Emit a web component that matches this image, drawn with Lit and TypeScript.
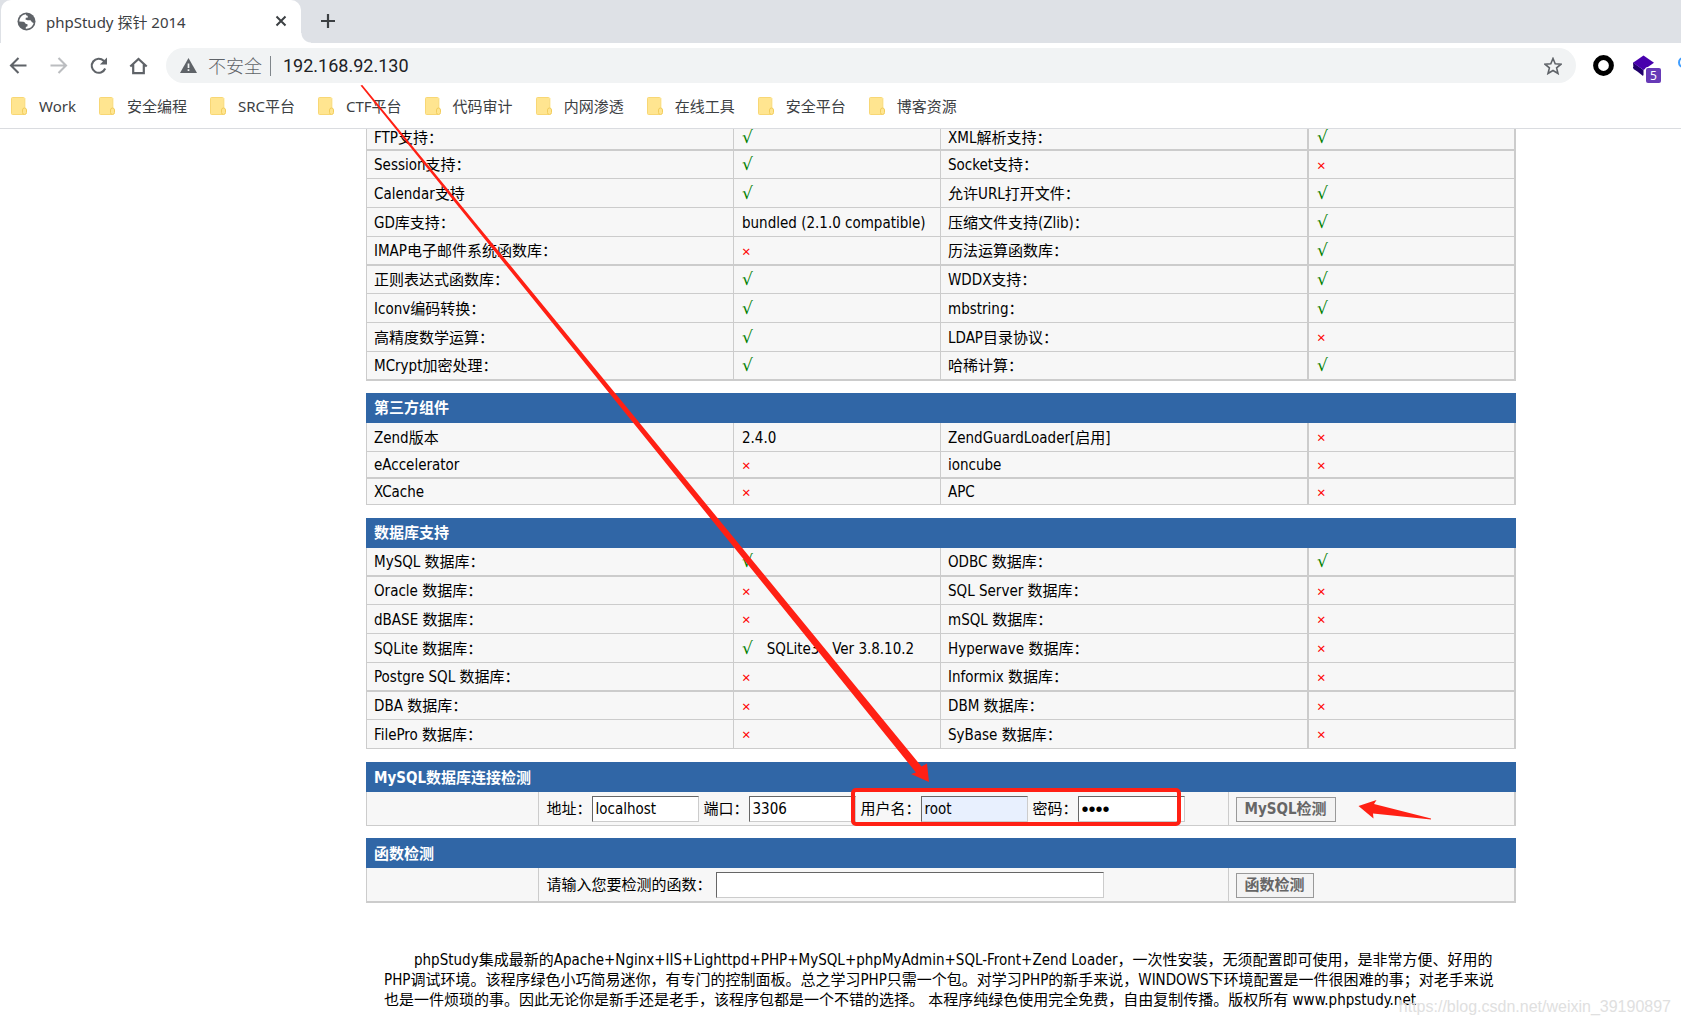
import { LitElement, html, css, svg, nothing } from "lit";
import { customElement, property } from "lit/decorators.js";
import { classMap } from "lit/directives/class-map.js";

interface Row {
  cells: [string, string, string, string];
  thick?: boolean;
  latin?: boolean;
  partial?: boolean;
}

const Y = "√";
const N = "×";

const MODULES: Row[] = [
  { cells: ["FTP支持：", Y, "XML解析支持：", Y], thick: true, partial: true },
  { cells: ["Session支持：", Y, "Socket支持：", N] },
  { cells: ["Calendar支持", Y, "允许URL打开文件：", Y] },
  { cells: ["GD库支持：", "bundled (2.1.0 compatible)", "压缩文件支持(Zlib)：", Y] },
  { cells: ["IMAP电子邮件系统函数库：", N, "历法运算函数库：", Y], thick: true },
  { cells: ["正则表达式函数库：", Y, "WDDX支持：", Y] },
  { cells: ["Iconv编码转换：", Y, "mbstring：", Y] },
  { cells: ["高精度数学运算：", Y, "LDAP目录协议：", N] },
  { cells: ["MCrypt加密处理：", Y, "哈稀计算：", Y], thick: true },
];

const COMPONENTS: Row[] = [
  { cells: ["Zend版本", "2.4.0", "ZendGuardLoader[启用]", N] },
  { cells: ["eAccelerator", N, "ioncube", N], thick: true, latin: true },
  { cells: ["XCache", N, "APC", N], latin: true },
];

const DATABASES: Row[] = [
  { cells: ["MySQL 数据库：", Y, "ODBC 数据库：", Y], thick: true },
  { cells: ["Oracle 数据库：", N, "SQL Server 数据库：", N] },
  { cells: ["dBASE 数据库：", N, "mSQL 数据库：", N] },
  { cells: ["SQLite 数据库：", "√\u00a0\u00a0 SQLite3\u00a0\u00a0 Ver 3.8.10.2", "Hyperwave 数据库：", N] },
  { cells: ["Postgre SQL 数据库：", N, "Informix 数据库：", N], thick: true },
  { cells: ["DBA 数据库：", N, "DBM 数据库：", N] },
  { cells: ["FilePro 数据库：", N, "SyBase 数据库：", N] },
];

const BOOKMARKS = ["Work", "安全编程", "SRC平台", "CTF平台", "代码审计", "内网渗透", "在线工具", "安全平台", "博客资源"];

@customElement("browser-chrome")
export class BrowserChrome extends LitElement {
  static styles = css`
    :host {
      display: block;
      flex: none;
      background: #fff;
      border-bottom: 1px solid #dadce0;
      font-family: "Noto Sans", "Noto Sans CJK SC", sans-serif;
      color: #3c4043;
    }
    button {
      border: 0;
      padding: 0;
      background: none;
      display: flex;
      flex: none;
    }
    svg {
      display: block;
      flex: none;
    }
    .tabs {
      display: flex;
      align-items: center;
      height: 43px;
      background: #dee1e6;
    }
    .tab {
      box-sizing: border-box;
      position: relative;
      display: flex;
      align-items: center;
      width: 300px;
      height: 43px;
      margin-left: 1px;
      padding: 0 14px 1px 16px;
      background: #fff;
      border-radius: 10px 10px 0 0;
      font-size: 15px;
    }
    .tab::after {
      content: "";
      position: absolute;
      left: 100%;
      bottom: 0;
      width: 10px;
      height: 10px;
      background: radial-gradient(circle at 10px 0, #dee1e6 9px, #fff 10px);
    }
    .title {
      flex: 1;
      margin-left: 10px;
      white-space: nowrap;
    }
    .new {
      margin: 0 0 2px 19px;
    }
    .bar {
      display: flex;
      align-items: center;
      height: 45px;
      padding-left: 9px;
      overflow: hidden;
    }
    .nav {
      display: flex;
      gap: 20px;
      margin-right: 17px;
    }
    .omni {
      flex: 1;
      display: flex;
      align-items: center;
      height: 35px;
      padding: 0 14px;
      border-radius: 18px;
      background: #f1f3f4;
      font-size: 18px;
    }
    .unsafe {
      margin: 0 8px 2px 11px;
      color: #5f6368;
      font-weight: 300;
      white-space: nowrap;
    }
    .sep {
      width: 1px;
      height: 20px;
      background: #80868b;
    }
    .url {
      flex: 1;
      min-width: 0;
      margin: 0 0 0 12px;
      padding: 0;
      border: 0;
      background: none;
      font: 18px Roboto, sans-serif;
      color: #202124;
    }
    .ext {
      display: flex;
      align-items: center;
      width: 105px;
      overflow: hidden;
    }
    .marks {
      box-sizing: border-box;
      display: flex;
      align-items: center;
      gap: 23px;
      height: 40px;
      padding: 0 11px 5px;
      font-size: 15px;
    }
    .marks a {
      display: flex;
      align-items: center;
      gap: 12px;
      color: inherit;
      text-decoration: none;
      white-space: nowrap;
    }
  `;

  render() {
    return html`
      <div class="tabs">
        <div class="tab">
          <svg width="19" height="19" viewBox="0 0 19 19">
            <circle cx="9.500" cy="9.500" r="9" fill="#5f6368" />
            <path d="M9 2.300C6 2.500 3.500 4.500 2.500 7.500L2.300 9.500L6.300 9.800C7.500 10 8.300 10.700 8.500 11.700L10.500 12.200V14.200L8.800 15V16.700C12.600 17 15.800 14.600 16.600 11L15 10.200L13.500 8.300H10.500L8.500 7.500L8.800 5.800L11 5.500L10.500 3.800L9 3.300Z" fill="#fff" />
          </svg>
          <span class="title">phpStudy 探针 2014</span>
          <button aria-label="关闭标签页">
            <svg width="12" height="12" viewBox="0 0 12 12"><path d="M1.500 1.500L10.500 10.500M10.500 1.500L1.500 10.500" stroke="#3c4043" stroke-width="2" /></svg>
          </button>
        </div>
        <button class="new" aria-label="新标签页">
          <svg width="16" height="16" viewBox="0 0 16 16"><path d="M8 1V15M1 8H15" stroke="#3c4043" stroke-width="2.200" /></svg>
        </button>
      </div>
      <div class="bar">
        <div class="nav">
          <button aria-label="后退"><svg width="20" height="20" viewBox="0 0 20 20"><path d="M17.500 9.500H2.500M9.500 2L2 9.500L9.500 17" fill="none" stroke="#5f6368" stroke-width="2.100" /></svg></button>
          <button aria-label="前进"><svg width="20" height="20" viewBox="0 0 20 20"><path d="M1.500 9.500H16.500M9.500 2L17 9.500L9.500 17" fill="none" stroke="#bbbdc0" stroke-width="2.100" /></svg></button>
          <button aria-label="重新加载"><svg width="20" height="20" viewBox="0 0 20 20"><path d="M16.200 12.500A7 7 0 1 1 14.700 4.800L16 6.200" fill="none" stroke="#5f6368" stroke-width="2.100" /><path d="M18 1.500V8.600H10.900Z" fill="#5f6368" /></svg></button>
          <button aria-label="主页"><svg width="20" height="20" viewBox="0 0 20 20"><path d="M1.300 10.500L9.500 3L17.700 10.500M4.200 8.500V17.200H14.800V8.500" fill="none" stroke="#5f6368" stroke-width="2.200" /></svg></button>
        </div>
        <div class="omni">
          <svg width="17" height="15" viewBox="0 0 17 15"><path d="M8.500 0L17 15H0Z" fill="#5f6368" /><path d="M8.500 5.500V10M8.500 11.300V13.100" stroke="#f1f3f4" stroke-width="1.700" /></svg>
          <span class="unsafe">不安全</span>
          <span class="sep"></span>
          <input class="url" aria-label="地址栏" .value=${"192.168.92.130"} />
          <button aria-label="收藏"><svg width="18" height="18" viewBox="0 0 18 18"><path d="M9 1.500L11.200 6.800L17 7.200L12.600 10.900L14 16.500L9 13.500L4 16.500L5.400 10.900L1 7.200L6.800 6.800Z" fill="none" stroke="#5f6368" stroke-width="1.600" /></svg></button>
        </div>
        <div class="ext">
          <svg width="107" height="36" viewBox="0 0 107 36">
            <circle cx="27.500" cy="17.500" r="7.900" fill="none" stroke="#000" stroke-width="5" />
            <path d="M57 19L67 26V28L57 20Z M57 14.500L67.500 22V27.500L57.500 21Z" fill="#20006b" />
            <path d="M67.500 7.500L78 14.800L67.500 22L57 14.800Z" fill="#4800ad" />
            <rect x="69" y="19" width="17" height="17" rx="3" fill="#fff" />
            <rect x="70" y="20" width="15" height="15" rx="2" fill="#673ab7" />
            <text x="77.500" y="32" text-anchor="middle" font-size="12" font-family="Noto Sans, sans-serif" fill="#fff">5</text>
            <circle cx="107.500" cy="14.500" r="4.500" fill="none" stroke="#409eff" stroke-width="2" />
          </svg>
        </div>
      </div>
      <nav class="marks">
        ${BOOKMARKS.map(
          (name) => html`<a href="#">
            <svg width="16" height="18" viewBox="0 0 16 18">
              <rect x="0.500" y="0.500" width="13" height="17" rx="1" fill="#ffe590" stroke="#f8d775" />
              <path d="M14.200 1V11" stroke="#fff0b8" />
              <rect x="11.500" y="11" width="4" height="6.500" rx="2" fill="#ffe590" stroke="#f2cd5c" />
            </svg>
            ${name}
          </a>`
        )}
      </nav>
    `;
  }
}

@customElement("probe-table")
export class ProbeTable extends LitElement {
  @property() heading = "";
  @property({ attribute: false }) rows: Row[] = [];

  static styles = css`
    :host {
      display: block;
    }
    table {
      width: 100%;
      table-layout: fixed;
      border-collapse: separate;
      border-spacing: 0;
    }
    .wide {
      width: 32%;
    }
    .narrow {
      width: 18%;
    }
    tr {
      height: 29px;
    }
    .thick + tr {
      height: 28px;
    }
    .latin {
      height: 27px;
    }
    .thick + .latin {
      height: 26px;
    }
    th {
      height: 30px;
      box-sizing: border-box;
      padding: 0 8px;
      background: #3066a6;
      color: #fff;
      line-height: 20px;
      text-align: left;
    }
    td {
      box-sizing: border-box;
      padding: 1px 0 0 8px;
      border: 0 solid #ccc;
      border-width: 0 1px 1px 0;
      background: #f7f7f7;
      line-height: 20px;
      white-space: nowrap;
    }
    td:nth-child(odd) {
      padding-left: 7px;
    }
    td:first-child {
      border-left-width: 1px;
    }
    td:nth-child(n + 3) {
      border-right-width: 2px;
    }
    .thick td {
      border-bottom-width: 2px;
    }
    .partial {
      height: 22px;
    }
    .partial td {
      padding-top: 0;
      line-height: 18px;
      vertical-align: top;
    }
    .yes {
      margin-right: 1px;
      color: #008000;
      font: 17px/16px "DejaVu Sans", sans-serif;
    }
    .no {
      color: #f00;
      font-family: "Noto Sans", sans-serif;
    }
  `;

  private mark(text: string) {
    if (text.startsWith(Y)) return html`<span class="yes">${Y}</span>${text.slice(1)}`;
    if (text === N) return html`<span class="no">${N}</span>`;
    return text;
  }

  render() {
    return html`<table>
      <colgroup>
        <col class="wide" /><col class="narrow" /><col class="wide" /><col class="narrow" />
      </colgroup>
      ${this.heading ? html`<thead><tr><th colspan="4">${this.heading}</th></tr></thead>` : nothing}
      <tbody>
        ${this.rows.map(
          (r) => html`<tr class=${classMap({ thick: !!r.thick, latin: !!r.latin, partial: !!r.partial })}>
            ${r.cells.map((c) => html`<td>${this.mark(c)}</td>`)}
          </tr>`
        )}
      </tbody>
    </table>`;
  }
}

@customElement("probe-form")
export class ProbeForm extends LitElement {
  @property() heading = "";
  @property() action = "";
  @property() kind: "mysql" | "func" = "mysql";

  static styles = css`
    :host {
      display: block;
    }
    h2 {
      margin: 0;
      padding: 2px 8px 0;
      background: #3066a6;
      color: #fff;
      font-size: 15px;
      line-height: 28px;
    }
    form {
      display: grid;
      grid-template-columns: 15% 60% 25%;
      background: #f7f7f7;
      border: 0 solid #ccc;
      border-width: 0 0 1px;
    }
    .func {
      border-bottom-width: 2px;
    }
    .cell {
      box-sizing: border-box;
      display: flex;
      align-items: center;
      gap: 5px;
      height: 33px;
      padding: 1px 0 0 8px;
      border-right: 1px solid #ccc;
      white-space: nowrap;
    }
    .cell:first-child {
      border-left: 1px solid #ccc;
    }
    .cell:last-child {
      padding-left: 7px;
      border-right-width: 2px;
    }
    label {
      display: flex;
      align-items: center;
      line-height: 20px;
    }
    .func label {
      gap: 4px;
    }
    input {
      box-sizing: border-box;
      width: 107px;
      height: 26px;
      padding: 0 3px;
      border: 1px solid #ccc;
      border-color: #666 #ccc #ccc #666;
      background: #fff;
      font: inherit;
      color: #000;
    }
    .func input {
      width: 388px;
    }
    .filled {
      background: #e8f0fe;
    }
    .secret {
      font: 20px "Liberation Sans", sans-serif;
    }
    button {
      box-sizing: border-box;
      height: 25px;
      padding: 0 8px;
      border: 1px solid #999;
      background: #f3f3f3;
      font: inherit;
      font-weight: bold;
      line-height: 22px;
      color: #666;
    }
  `;

  render() {
    return html`
      <h2>${this.heading}</h2>
      <form class=${this.kind}>
        <div class="cell"></div>
        <div class="cell">
          ${this.kind === "mysql"
            ? html`
                <label>地址：<input type="text" value="localhost" /></label>
                <label>端口：<input type="text" value="3306" /></label>
                <label>用户名：<input class="filled" type="text" value="root" autocomplete="off" /></label>
                <label>密码：<input class="secret" type="password" value="root" autocomplete="off" /></label>
              `
            : html`<label>请输入您要检测的函数：<input type="text" /></label>`}
        </div>
        <div class="cell"><button type="button">${this.action}</button></div>
      </form>
    `;
  }
}

@customElement("app-root")
export class AppRoot extends LitElement {
  static styles = css`
    :host {
      position: relative;
      display: flex;
      flex-direction: column;
      height: 100vh;
      overflow: hidden;
      background: #fff;
      color: #000;
      font-family: "DejaVu Sans Condensed", "Noto Sans CJK SC", sans-serif;
      font-size: 15px;
    }
    .view {
      flex: 1;
      min-height: 0;
      overflow: hidden;
    }
    .page {
      display: flex;
      flex-direction: column;
      padding: 0 165px 0 366px;
    }
    .block {
      margin-bottom: 13px;
    }
    .snug {
      margin-bottom: 12px;
    }
    .about {
      margin: 34px 0 0;
      padding: 0 18px;
      line-height: 20px;
      text-indent: 30px;
      white-space: nowrap;
    }
    .notes {
      position: absolute;
      left: 0;
      top: 0;
      pointer-events: none;
    }
    .credit {
      position: absolute;
      right: 10px;
      bottom: 8px;
      font: 16px/20px "Liberation Sans", sans-serif;
      color: #e0e0e0;
    }
  `;

  render() {
    return html`
      <browser-chrome></browser-chrome>
      <main class="view">
        <div class="page">
          <probe-table class="snug" .rows=${MODULES}></probe-table>
          <probe-table class="block" heading="第三方组件" .rows=${COMPONENTS}></probe-table>
          <probe-table class="block" heading="数据库支持" .rows=${DATABASES}></probe-table>
          <probe-form class="snug" heading="MySQL数据库连接检测" action="MySQL检测" kind="mysql"></probe-form>
          <probe-form class="block" heading="函数检测" action="函数检测" kind="func"></probe-form>
          <p class="about">
            phpStudy集成最新的Apache+Nginx+IIS+Lighttpd+PHP+MySQL+phpMyAdmin+SQL-Front+Zend Loader，一次性安装，无须配置即可使用，是非常方便、好用的<br />PHP调试环境。该程序绿色小巧简易迷你，有专门的控制面板。总之学习PHP只需一个包。对学习PHP的新手来说，WINDOWS下环境配置是一件很困难的事；对老手来说<br />也是一件烦琐的事。因此无论你是新手还是老手，该程序包都是一个不错的选择。 本程序纯绿色使用完全免费，自由复制传播。版权所有 www.phpstudy.net
          </p>
        </div>
      </main>
      <svg class="notes" width="1681" height="1025" viewBox="0 0 1681 1025">
        ${svg`
          <path d="M360.500 85.500L362.300 85L921.500 766.500L927 763.500L929 782L911 774L916 772.500Z" fill="#ff2014" />
          <rect x="853" y="790" width="326" height="34" rx="3" fill="none" stroke="#ff2014" stroke-width="4" />
          <path d="M1358.500 806L1376.500 800L1374 804L1431 818.500V819.500L1373 813.500L1373.500 818.500Z" fill="#ff2014" />
        `}
      </svg>
      <span class="credit">https://blog.csdn.net/weixin_39190897</span>
    `;
  }
}
